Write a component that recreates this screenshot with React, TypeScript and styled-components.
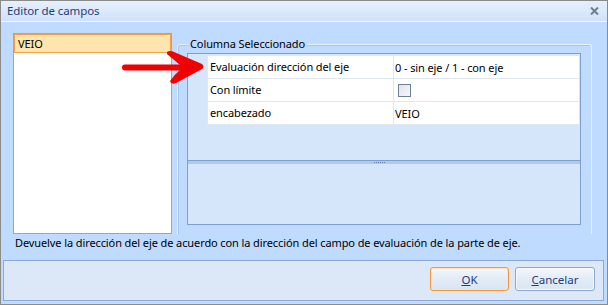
import React from "react";
import styled, { createGlobalStyle } from "styled-components";

const Global = createGlobalStyle`
  html, body { margin: 0; padding: 0; background: #ffffff; }
  body {
    font-family: "Noto Sans", "Open Sans", sans-serif;
    font-size: 11px;
    letter-spacing: -0.1px;
  }
  * { box-sizing: border-box; }
`;

const Window = styled.div`
  width: 608px;
  height: 305px;
  border: 1px solid #8b8b8b;
  background: #bfdbff;
  display: flex;
  flex-direction: column;
  position: relative;
  overflow: hidden;
`;

const TitleBar = styled.div`
  height: 21px;
  flex: none;
  display: flex;
  align-items: center;
  justify-content: space-between;
  padding: 0 8px 0 6px;
  background: linear-gradient(#e6f0fd, #d0e2f9);
  border-bottom: 1px solid #f4f9ff;
`;

const Title = styled.span`
  color: #1e3f7a;
  font-size: 11.5px;
  line-height: 20px;
`;

const Body = styled.div`
  flex: 1;
  display: flex;
  flex-direction: column;
  padding: 11px 14px 0 12px;
`;

const MainRow = styled.div`
  display: flex;
  gap: 5px;
  height: 201px;
`;

const ListBox = styled.div`
  width: 159px;
  height: 201px;
  background: #ffffff;
  border: 1px solid #8aa8d8;
  display: flex;
  flex-direction: column;
`;

const ListItem = styled.div<{ $selected?: boolean }>`
  height: 19px;
  line-height: 17px;
  padding-left: 3px;
  color: #000;
  background: ${(p) => (p.$selected ? "#fee5ad" : "transparent")};
  border: 1px solid ${(p) => (p.$selected ? "#f6a04a" : "transparent")};
`;

const GroupBox = styled.div`
  position: relative;
  margin-top: 11px;
  width: 415px;
  height: 190px;
  border: 1px solid #e6effb;
  border-bottom: none;
  border-radius: 3px 3px 0 0;
  box-shadow: inset 1px 1px 0 #a9c5ea;
  padding: 8px 10px 0 9px;
`;

const Legend = styled.span`
  position: absolute;
  top: -8px;
  left: 10px;
  padding: 0 2px;
  background: #bfdbff;
  color: #000;
  line-height: 14px;
`;

const Panel = styled.div`
  width: 394px;
  height: 172px;
  border: 1px solid #7d9fd3;
  background: #d5e5fa;
  display: flex;
  flex-direction: column;
`;

const GridArea = styled.div`
  height: 106px;
  padding: 1px 1px 0 19px;
`;

const Grid = styled.div`
  border-top: 1px solid #dfe7f1;
  border-left: 1px solid #dfe7f1;
  background: #ffffff;
`;

const Row = styled.div`
  display: grid;
  grid-template-columns: 186px 1fr;
  height: 23px;
  border-bottom: 1px solid #dfe7f1;
`;

const LabelCell = styled.div`
  border-right: 1px solid #dfe7f1;
  padding-left: 2px;
  line-height: 22px;
  color: #000;
  white-space: nowrap;
`;

const ValueCell = styled.div`
  padding-left: 1px;
  display: flex;
  align-items: center;
  color: #000;
  white-space: nowrap;
`;

const CheckBox = styled.div`
  width: 13px;
  height: 13px;
  margin-left: 3px;
  border: 1px solid #707f92;
  background: linear-gradient(135deg, #dfe3ea, #f7f8fa);
`;

const Splitter = styled.div`
  height: 4px;
  border-top: 1px solid #7d9fd3;
  background: #b2c9ea;
  display: flex;
  justify-content: center;
  align-items: center;
`;

const Grip = styled.div`
  width: 11px;
  height: 1px;
  margin-right: 10px;
  background: repeating-linear-gradient(90deg, #5f7fae 0 1px, transparent 1px 2px);
`;

const DescArea = styled.div`
  flex: 1;
`;

const Description = styled.div`
  height: 26px;
  line-height: 16px;
  padding: 1px 0 0 2px;
  color: #000;
  white-space: nowrap;
`;

const ButtonPanel = styled.div`
  flex: none;
  height: 41px;
  margin: 0 3px 3px 2px;
  border: 1px solid #8aa8d8;
  background: #dce8f7;
  display: flex;
  justify-content: flex-end;
  align-items: flex-start;
  gap: 6px;
  padding: 6px 8px 0 0;
`;

const Button = styled.button<{ $focused?: boolean; $w: number }>`
  width: ${(p) => p.$w}px;
  height: 24px;
  border-radius: 3px;
  border: 1px solid ${(p) => (p.$focused ? "#f29a36" : "#8ea7c8")};
  background: linear-gradient(#f4f8fd, #e2ebf6 50%, #d9e5f4);
  box-shadow: inset 0 0 0 1px ${(p) => (p.$focused ? "#fbe2c0" : "#f6f9fd")};
  font-family: "Noto Sans", "Open Sans", sans-serif;
  font-size: 11.5px;
  color: #1e3f7a;
  padding: 0;
  u { text-decoration: underline; }
`;

const ArrowSvg = styled.svg`
  position: absolute;
  left: 0;
  top: 0;
  pointer-events: none;
`;

export default function App() {
  return (
    <>
      <Global />
      <Window>
        <TitleBar>
          <Title>Editor de campos</Title>
          <svg width="9" height="8" viewBox="0 0 9 8">
            <path d="M1 0.5 L8 7.5 M8 0.5 L1 7.5" stroke="#6d7d94" strokeWidth="2" />
          </svg>
        </TitleBar>
        <Body>
          <MainRow>
            <ListBox>
              <ListItem $selected>VEIO</ListItem>
            </ListBox>
            <GroupBox>
              <Legend>Columna Seleccionado</Legend>
              <Panel>
                <GridArea>
                  <Grid>
                    <Row>
                      <LabelCell>Evaluación dirección del eje</LabelCell>
                      <ValueCell>0 - sin eje / 1 - con eje</ValueCell>
                    </Row>
                    <Row>
                      <LabelCell>Con límite</LabelCell>
                      <ValueCell>
                        <CheckBox />
                      </ValueCell>
                    </Row>
                    <Row>
                      <LabelCell>encabezado</LabelCell>
                      <ValueCell>VEIO</ValueCell>
                    </Row>
                  </Grid>
                </GridArea>
                <Splitter>
                  <Grip />
                </Splitter>
                <DescArea />
              </Panel>
            </GroupBox>
          </MainRow>
          <Description>
            Devuelve la dirección del eje de acuerdo con la dirección del campo de evaluación de la parte de eje.
          </Description>
        </Body>
        <ButtonPanel>
          <Button $focused $w={79}>
            <u>O</u>K
          </Button>
          <Button $w={80}>
            <u>C</u>ancelar
          </Button>
        </ButtonPanel>
        <ArrowSvg width="608" height="305" viewBox="0 0 608 305">
          <path d="M124 66.5 L178 66.5" stroke="#f00000" strokeWidth="6" strokeLinecap="round" />
          <path
            d="M166 51 Q169 49 173 51 L201 63 Q204 66 201 68 L175 82 Q170 84 169 80 Q173 74 179 69 L179 64 Q172 58 166 53 Z"
            fill="#f00000"
          />
        </ArrowSvg>
      </Window>
    </>
  );
}
